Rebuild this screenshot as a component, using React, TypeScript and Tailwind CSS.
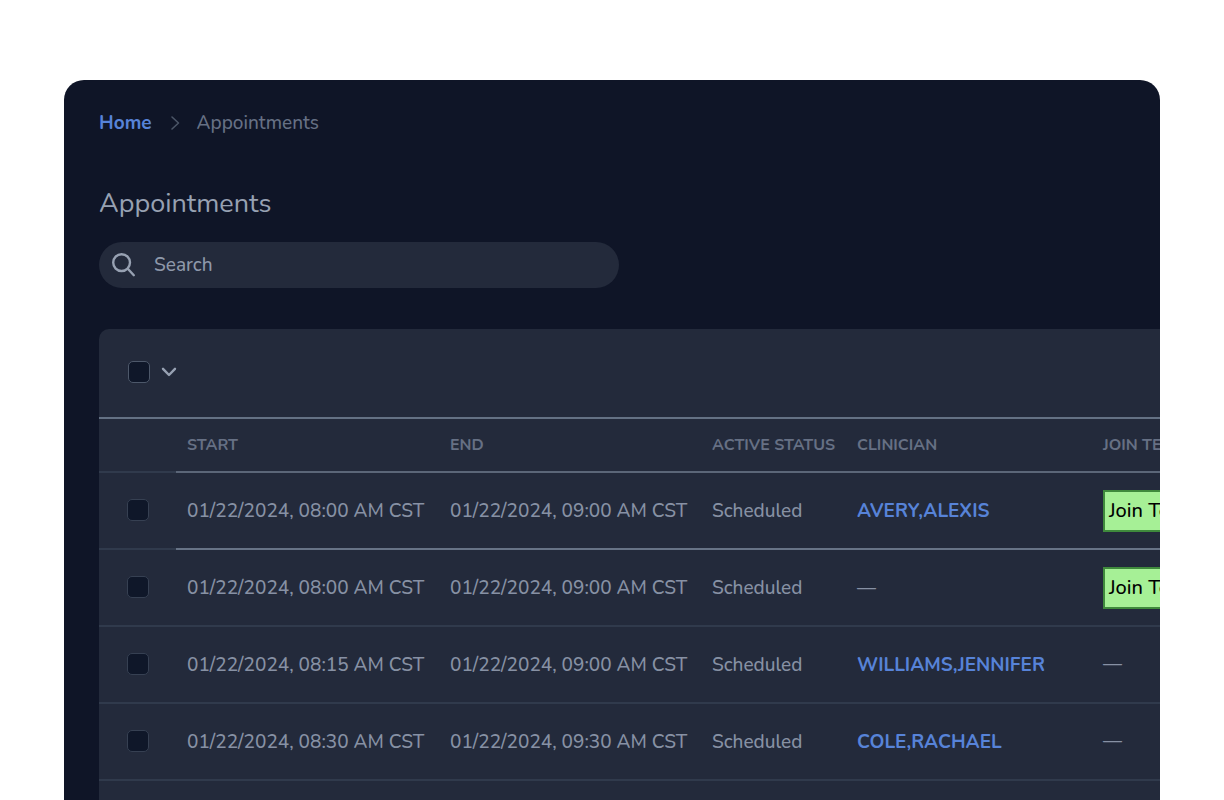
import React from "react";

type Appointment = {
  start: string;
  end: string;
  status: string;
  clinician?: string;
  joinable?: boolean;
};

const appointments: Appointment[] = [
  { start: "01/22/2024, 08:00 AM CST", end: "01/22/2024, 09:00 AM CST", status: "Scheduled", clinician: "AVERY,ALEXIS", joinable: true },
  { start: "01/22/2024, 08:00 AM CST", end: "01/22/2024, 09:00 AM CST", status: "Scheduled", joinable: true },
  { start: "01/22/2024, 08:15 AM CST", end: "01/22/2024, 09:00 AM CST", status: "Scheduled", clinician: "WILLIAMS,JENNIFER" },
  { start: "01/22/2024, 08:30 AM CST", end: "01/22/2024, 09:30 AM CST", status: "Scheduled", clinician: "COLE,RACHAEL" },
];

const checkboxBase =
  "block size-[22px] shrink-0 appearance-none rounded-[5px] border bg-[#0f1729] checked:bg-[#5783d8]";

function Breadcrumb() {
  return (
    <nav aria-label="Breadcrumb" className="flex h-6 items-center text-[19px] font-medium">
      <a href="#home" className="font-bold text-[#5783d8]">Home</a>
      <svg className="ml-[18px] mr-[17px] h-4 w-[10px]" viewBox="0 0 10 16" fill="none" stroke="#4b5567" strokeWidth="1.6" strokeLinecap="round" strokeLinejoin="round" aria-hidden="true">
        <path d="M2 2 8.5 8 2 14" />
      </svg>
      <span className="text-[#667084]">Appointments</span>
    </nav>
  );
}

function SearchBox() {
  return (
    <div className="mt-5 flex h-[46px] w-full max-w-[520px] items-center rounded-full bg-[#232a3b] pl-[13px]">
      <svg className="size-6 shrink-0" viewBox="0 0 24 24" fill="none" stroke="#97a1b2" strokeWidth="2.4" strokeLinecap="round" aria-hidden="true">
        <circle cx="9.6" cy="9.6" r="8.4" />
        <path d="m15.8 15.8 6 6.4" />
      </svg>
      <input
        type="search"
        aria-label="Search appointments"
        placeholder="Search"
        className="ml-[18px] h-full min-w-0 flex-1 bg-transparent text-[19px] font-medium text-[#97a1b2] outline-none placeholder:text-[#8e98aa]"
      />
    </div>
  );
}

function AppointmentRow({ item, index }: { item: Appointment; index: number }) {
  const line = index === 0 ? "border-b-2 border-[#677386]" : "border-b-2 border-[#303a4c]";
  const cell = `px-[11px] pb-0 pt-px ${line}`;
  return (
    <tr className="h-[77px]">
      <td className="border-b-2 border-[#303a4c] pb-0.5 pl-7 pt-0">
        <input type="checkbox" aria-label={`Select appointment ${index + 1}`} className={`${checkboxBase} border-[#364052]`} />
      </td>
      <td className={cell}>{item.start}</td>
      <td className={cell}>{item.end}</td>
      <td className={cell}>{item.status}</td>
      <td className={cell}>
        {item.clinician ? (
          <a href="#clinician" className="font-bold text-[#5783d8]">{item.clinician}</a>
        ) : (
          "—"
        )}
      </td>
      <td className={`px-[11px] py-0 ${line}`}>
        {item.joinable ? (
          <button type="button" className="block h-[42px] border-2 border-[#3f8a3c] bg-[#a6f096] px-1 text-xl font-medium text-black">
            Join Telehealth
          </button>
        ) : (
          "—"
        )}
      </td>
    </tr>
  );
}

export default function App() {
  const headCell = "border-b-2 border-[#5b6678] px-[11px] py-0";
  return (
    <div className="h-screen overflow-hidden bg-white px-16 pt-20 font-['Nunito','Lato',sans-serif]">
      <main className="h-full overflow-hidden rounded-t-[20px] bg-[#0f1527] pl-[35px] pt-[31px] text-[#8791a4]">
        <Breadcrumb />
        <h1 className="mt-[51px] text-[27px] leading-9 text-[#97a1b2]">Appointments</h1>
        <SearchBox />
        <section className="mt-[41px] h-screen overflow-hidden rounded-tl-[10px] bg-[#232a3b]">
          <div className="flex h-[90px] items-center border-b-2 border-[#647184] pb-0.5 pl-[29px]">
            <input type="checkbox" aria-label="Select all appointments" className={`${checkboxBase} border-[#4d586a]`} />
            <button type="button" aria-label="Selection options" className="ml-[9px] flex size-5 items-center justify-center">
              <svg className="h-[10px] w-4" viewBox="0 0 16 10" fill="none" stroke="#97a1b2" strokeWidth="2.4" strokeLinecap="round" strokeLinejoin="round" aria-hidden="true">
                <path d="m2 1.8 6 6.2 6-6.2" />
              </svg>
            </button>
          </div>
          <table className="w-full min-w-[1240px] table-fixed border-separate border-spacing-0 whitespace-nowrap text-left text-[19px] font-medium">
            <colgroup>
              <col className="w-[77px]" />
              <col className="w-[263px]" />
              <col className="w-[262px]" />
              <col className="w-[145px]" />
              <col className="w-[246px]" />
              <col />
            </colgroup>
            <thead>
              <tr className="h-[54px] text-base font-bold text-[#667084]">
                <td className="border-b-2 border-[#303a4c]" />
                <th scope="col" className={headCell}>START</th>
                <th scope="col" className={headCell}>END</th>
                <th scope="col" className={headCell}>ACTIVE STATUS</th>
                <th scope="col" className={headCell}>CLINICIAN</th>
                <th scope="col" className={headCell}>JOIN TELEHEALTH</th>
              </tr>
            </thead>
            <tbody>
              {appointments.map((item, index) => (
                <AppointmentRow key={index} item={item} index={index} />
              ))}
            </tbody>
          </table>
        </section>
      </main>
    </div>
  );
}
